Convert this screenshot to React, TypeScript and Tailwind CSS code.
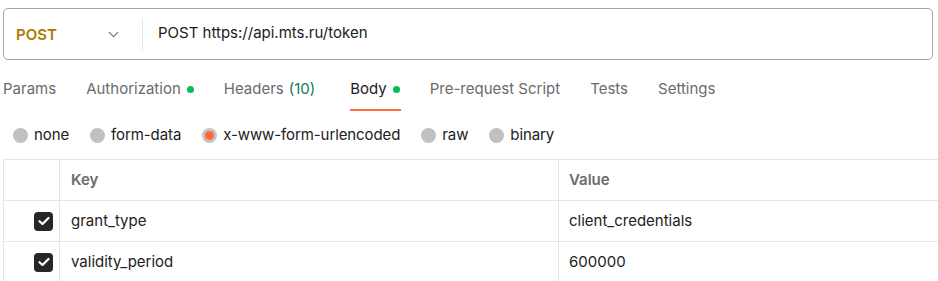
import { ChevronDown } from "lucide-react";

const tabs: { label: string; dot?: boolean; count?: string; active?: boolean }[] = [
  { label: "Params" },
  { label: "Authorization", dot: true },
  { label: "Headers", count: "(10)" },
  { label: "Body", dot: true, active: true },
  { label: "Pre-request Script" },
  { label: "Tests" },
  { label: "Settings" },
];

const bodyTypes = ["none", "form-data", "x-www-form-urlencoded", "raw", "binary"];

const rows = [
  { key: "grant_type", value: "client_credentials" },
  { key: "validity_period", value: "600000" },
];

function Check() {
  return (
    <div className="w-[19px] h-[19px] rounded-[4px] bg-[#262626] flex items-center justify-center">
      <svg width="12" height="10" viewBox="0 0 12 10" fill="none">
        <path d="M1.5 5.2 4.5 8 10.5 2" stroke="#fff" strokeWidth="2.2" strokeLinecap="round" strokeLinejoin="round" />
      </svg>
    </div>
  );
}

export default function App() {
  return (
    <div className="w-[938px] h-[281px] overflow-hidden bg-white text-[15px] text-[#212121] font-['Inter',sans-serif]">
      <div className="pt-[8px] pl-[3px] pr-[5px]">
        <div className="h-[52px] border border-[#a6a6a6] rounded-[5px] flex items-center">
          <div className="w-[138px] flex items-center pl-[12px] pr-[20px]">
            <span className="font-semibold text-[#ad7a03] mt-[2px]">POST</span>
            <ChevronDown className="ml-auto text-[#6b6b6b] mt-[1px]" size={17} strokeWidth={1.5} />
          </div>
          <div className="w-px h-[31px] bg-[#e6e6e6]" />
          <span className="pl-[15px] -mt-[1px]">POST https://api.mts.ru/token</span>
        </div>
      </div>

      <div className="flex items-center pl-[3px] gap-[30px] h-[50px] mt-[4px]">
        {tabs.map((t) => (
          <div key={t.label} className={"relative h-full flex items-center" + (t.count ? " mr-[5px]" : "")}>
            <span className={t.active ? "text-[#212121]" : "text-[#6b6b6b]"}>{t.label}</span>
            {t.count && <span className="ml-[5px] text-[#0c7a52]">{t.count}</span>}
            {t.dot && <span className="ml-[6px] w-[7px] h-[7px] rounded-full bg-[#0cbb52]" />}
            {t.active && <div className="absolute left-0 right-[-1px] bottom-[3px] h-[2px] bg-[#ff6c37]" />}
          </div>
        ))}
      </div>

      <div className="flex items-center h-[40px] pl-[13px] gap-[21px] mt-[1px] tracking-[-0.1px]">
        {bodyTypes.map((b) => (
          <div key={b} className="flex items-center gap-[6px]">
            {b === "x-www-form-urlencoded" ? (
              <span className="w-[15px] h-[15px] rounded-full bg-[#c4c4c4] flex items-center justify-center">
                <span className="w-[9px] h-[9px] rounded-full bg-[#ff6c37]" />
              </span>
            ) : (
              <span className="w-[15px] h-[15px] rounded-full bg-[#c0c0c0]" />
            )}
            <span>{b}</span>
          </div>
        ))}
      </div>

      <div className="ml-[3px] mt-[4px] border-t border-l border-[#e6e6e6]">
        <div className="flex h-[41px] border-b border-[#e6e6e6] font-semibold text-[#6b6b6b]">
          <div className="w-[56px] border-r border-[#e6e6e6]" />
          <div className="w-[499px] border-r border-[#e6e6e6] flex items-center pl-[11px]">Key</div>
          <div className="flex-1 flex items-center pl-[10px]">Value</div>
        </div>
        {rows.map((r) => (
          <div key={r.key} className="flex h-[41px] border-b border-[#e6e6e6]">
            <div className="w-[56px] border-r border-[#e6e6e6] flex items-center justify-end pr-[6px]">
              <Check />
            </div>
            <div className="w-[499px] border-r border-[#e6e6e6] flex items-center pl-[11px]">{r.key}</div>
            <div className="flex-1 flex items-center pl-[10px]">{r.value}</div>
          </div>
        ))}
      </div>
    </div>
  );
}
